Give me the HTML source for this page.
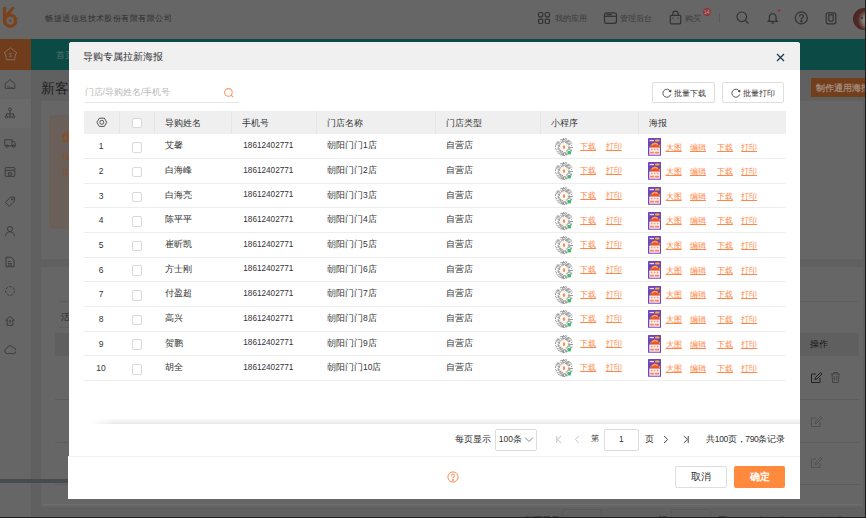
<!DOCTYPE html>
<html><head><meta charset="utf-8">
<style>
*{margin:0;padding:0;box-sizing:border-box}
html,body{width:866px;height:518px;overflow:hidden;background:#606060;font-family:"Liberation Sans",sans-serif;color:#333}
.a{position:absolute}
.nw{white-space:nowrap}
/* background page (observed dimmed colours) */
#hdr{left:0;top:0;width:866px;height:38.7px;background:#666}
#nav{left:31.3px;top:38.7px;width:835px;height:30.9px;background:#0c4a45}
#side{left:0;top:38.7px;width:32px;height:480px;background:#666;border-right:1px solid #5e5e5e}
#act{left:0;top:38.7px;width:31.3px;height:30.9px;background:#6f3c1c}
#hl{left:0;top:99px;width:31px;height:29px;background:#6a6a6a}
.card{position:absolute;background:#666}
.bgt{position:absolute;color:#2a2a2a;white-space:nowrap}
#rstrip{left:864.6px;top:0;width:1.4px;height:518px;background:#1e1e1e}
#bstrip{left:0;top:516.6px;width:866px;height:1.4px;background:#1e1e1e}
.line{position:absolute;height:1px;background:#5d5d5d}
/* modal */
#modal{left:69px;top:42px;width:731px;height:414px;background:#fff;border-radius:3px 3px 0 0;overflow:hidden}
#mfoot{left:68px;top:456px;width:732px;height:42.5px;background:#fff;border-top:1px solid #edf2f6}
#mh{left:0;top:0;width:731px;height:27.5px;background:#f0f0f0}
#mt{left:14px;top:8.5px;font-size:9.7px;color:#333;white-space:nowrap;line-height:12px}
.btn{position:absolute;border:1px solid #dedede;border-radius:2px;background:#fff;font-size:8.5px;color:#333;white-space:nowrap}
table{border-collapse:collapse;table-layout:fixed}
#tbl{position:absolute;left:14.5px;top:69px;width:702px}
#tbl th{height:23.5px;background:#efefef;font-weight:normal;text-align:left;font-size:8.5px;color:#333;padding:0;position:relative}
#tbl td{height:24.66px;font-size:8.5px;color:#333;padding:0;border-bottom:1px solid #ececec;white-space:nowrap}
#tbl th+th:before{content:"";position:absolute;left:0;top:0;width:1px;height:100%;background:#e3e3e3}
.cb{display:inline-block;width:10.5px;height:10.5px;border:1px solid #d9d9d9;border-radius:2px;background:#fff;vertical-align:middle}
.td.lk{color:#ff8646;text-decoration:underline;text-underline-offset:0.5px;text-decoration-thickness:0.7px;margin-top:1.3px;font-size:8.2px}
.th{font-size:8.5px;line-height:12px;color:#333}
.td{font-size:8.5px;line-height:12px;color:#333}
.rl{height:1px;background:#ededed}
</style></head><body>
<svg width="0" height="0" style="position:absolute">
 <defs>
  <g id="qr">
   <clipPath id="qc"><circle cx="10" cy="10" r="9"/></clipPath>
   <g clip-path="url(#qc)" fill="#4a4a4a" opacity="0.72"><rect x="1.00" y="1.00" width="0.90" height="0.90"/><rect x="1.00" y="2.80" width="0.90" height="0.90"/><rect x="1.00" y="5.50" width="0.90" height="0.90"/><rect x="1.00" y="6.40" width="0.90" height="0.90"/><rect x="1.00" y="8.20" width="0.90" height="0.90"/><rect x="1.00" y="9.10" width="0.90" height="0.90"/><rect x="1.00" y="10.90" width="0.90" height="0.90"/><rect x="1.00" y="12.70" width="0.90" height="0.90"/><rect x="1.00" y="14.50" width="0.90" height="0.90"/><rect x="1.90" y="1.90" width="0.90" height="0.90"/><rect x="1.90" y="4.60" width="0.90" height="0.90"/><rect x="1.90" y="5.50" width="0.90" height="0.90"/><rect x="1.90" y="7.30" width="0.90" height="0.90"/><rect x="1.90" y="11.80" width="0.90" height="0.90"/><rect x="1.90" y="13.60" width="0.90" height="0.90"/><rect x="1.90" y="16.30" width="0.90" height="0.90"/><rect x="1.90" y="17.20" width="0.90" height="0.90"/><rect x="1.90" y="18.10" width="0.90" height="0.90"/><rect x="2.80" y="1.90" width="0.90" height="0.90"/><rect x="2.80" y="3.70" width="0.90" height="0.90"/><rect x="2.80" y="5.50" width="0.90" height="0.90"/><rect x="2.80" y="6.40" width="0.90" height="0.90"/><rect x="2.80" y="14.50" width="0.90" height="0.90"/><rect x="3.70" y="1.90" width="0.90" height="0.90"/><rect x="3.70" y="4.60" width="0.90" height="0.90"/><rect x="3.70" y="5.50" width="0.90" height="0.90"/><rect x="3.70" y="8.20" width="0.90" height="0.90"/><rect x="3.70" y="10.00" width="0.90" height="0.90"/><rect x="3.70" y="10.90" width="0.90" height="0.90"/><rect x="3.70" y="11.80" width="0.90" height="0.90"/><rect x="3.70" y="14.50" width="0.90" height="0.90"/><rect x="3.70" y="16.30" width="0.90" height="0.90"/><rect x="3.70" y="18.10" width="0.90" height="0.90"/><rect x="4.60" y="4.60" width="0.90" height="0.90"/><rect x="4.60" y="5.50" width="0.90" height="0.90"/><rect x="4.60" y="7.30" width="0.90" height="0.90"/><rect x="4.60" y="8.20" width="0.90" height="0.90"/><rect x="4.60" y="9.10" width="0.90" height="0.90"/><rect x="4.60" y="10.90" width="0.90" height="0.90"/><rect x="4.60" y="11.80" width="0.90" height="0.90"/><rect x="4.60" y="13.60" width="0.90" height="0.90"/><rect x="4.60" y="16.30" width="0.90" height="0.90"/><rect x="4.60" y="17.20" width="0.90" height="0.90"/><rect x="5.50" y="6.40" width="0.90" height="0.90"/><rect x="5.50" y="8.20" width="0.90" height="0.90"/><rect x="5.50" y="9.10" width="0.90" height="0.90"/><rect x="5.50" y="12.70" width="0.90" height="0.90"/><rect x="5.50" y="13.60" width="0.90" height="0.90"/><rect x="5.50" y="15.40" width="0.90" height="0.90"/><rect x="5.50" y="18.10" width="0.90" height="0.90"/><rect x="6.40" y="1.90" width="0.90" height="0.90"/><rect x="6.40" y="3.70" width="0.90" height="0.90"/><rect x="6.40" y="6.40" width="0.90" height="0.90"/><rect x="6.40" y="7.30" width="0.90" height="0.90"/><rect x="6.40" y="10.00" width="0.90" height="0.90"/><rect x="6.40" y="10.90" width="0.90" height="0.90"/><rect x="6.40" y="12.70" width="0.90" height="0.90"/><rect x="6.40" y="13.60" width="0.90" height="0.90"/><rect x="6.40" y="14.50" width="0.90" height="0.90"/><rect x="6.40" y="15.40" width="0.90" height="0.90"/><rect x="6.40" y="17.20" width="0.90" height="0.90"/><rect x="6.40" y="18.10" width="0.90" height="0.90"/><rect x="7.30" y="1.90" width="0.90" height="0.90"/><rect x="7.30" y="4.60" width="0.90" height="0.90"/><rect x="7.30" y="5.50" width="0.90" height="0.90"/><rect x="7.30" y="7.30" width="0.90" height="0.90"/><rect x="7.30" y="8.20" width="0.90" height="0.90"/><rect x="7.30" y="9.10" width="0.90" height="0.90"/><rect x="7.30" y="10.90" width="0.90" height="0.90"/><rect x="7.30" y="11.80" width="0.90" height="0.90"/><rect x="7.30" y="12.70" width="0.90" height="0.90"/><rect x="7.30" y="14.50" width="0.90" height="0.90"/><rect x="7.30" y="16.30" width="0.90" height="0.90"/><rect x="7.30" y="17.20" width="0.90" height="0.90"/><rect x="8.20" y="1.90" width="0.90" height="0.90"/><rect x="8.20" y="2.80" width="0.90" height="0.90"/><rect x="8.20" y="3.70" width="0.90" height="0.90"/><rect x="8.20" y="5.50" width="0.90" height="0.90"/><rect x="8.20" y="8.20" width="0.90" height="0.90"/><rect x="8.20" y="9.10" width="0.90" height="0.90"/><rect x="8.20" y="12.70" width="0.90" height="0.90"/><rect x="8.20" y="13.60" width="0.90" height="0.90"/><rect x="8.20" y="14.50" width="0.90" height="0.90"/><rect x="8.20" y="16.30" width="0.90" height="0.90"/><rect x="8.20" y="17.20" width="0.90" height="0.90"/><rect x="8.20" y="18.10" width="0.90" height="0.90"/><rect x="9.10" y="1.00" width="0.90" height="0.90"/><rect x="9.10" y="1.90" width="0.90" height="0.90"/><rect x="9.10" y="3.70" width="0.90" height="0.90"/><rect x="9.10" y="4.60" width="0.90" height="0.90"/><rect x="9.10" y="8.20" width="0.90" height="0.90"/><rect x="9.10" y="10.90" width="0.90" height="0.90"/><rect x="9.10" y="15.40" width="0.90" height="0.90"/><rect x="9.10" y="16.30" width="0.90" height="0.90"/><rect x="9.10" y="17.20" width="0.90" height="0.90"/><rect x="9.10" y="18.10" width="0.90" height="0.90"/><rect x="10.00" y="1.90" width="0.90" height="0.90"/><rect x="10.00" y="3.70" width="0.90" height="0.90"/><rect x="10.00" y="10.00" width="0.90" height="0.90"/><rect x="10.00" y="11.80" width="0.90" height="0.90"/><rect x="10.00" y="12.70" width="0.90" height="0.90"/><rect x="10.00" y="15.40" width="0.90" height="0.90"/><rect x="10.00" y="18.10" width="0.90" height="0.90"/><rect x="10.90" y="1.00" width="0.90" height="0.90"/><rect x="10.90" y="2.80" width="0.90" height="0.90"/><rect x="10.90" y="4.60" width="0.90" height="0.90"/><rect x="10.90" y="5.50" width="0.90" height="0.90"/><rect x="10.90" y="8.20" width="0.90" height="0.90"/><rect x="10.90" y="12.70" width="0.90" height="0.90"/><rect x="10.90" y="15.40" width="0.90" height="0.90"/><rect x="10.90" y="16.30" width="0.90" height="0.90"/><rect x="10.90" y="17.20" width="0.90" height="0.90"/><rect x="11.80" y="1.00" width="0.90" height="0.90"/><rect x="11.80" y="1.90" width="0.90" height="0.90"/><rect x="11.80" y="3.70" width="0.90" height="0.90"/><rect x="11.80" y="4.60" width="0.90" height="0.90"/><rect x="11.80" y="5.50" width="0.90" height="0.90"/><rect x="11.80" y="6.40" width="0.90" height="0.90"/><rect x="11.80" y="7.30" width="0.90" height="0.90"/><rect x="11.80" y="10.00" width="0.90" height="0.90"/><rect x="11.80" y="11.80" width="0.90" height="0.90"/><rect x="11.80" y="12.70" width="0.90" height="0.90"/><rect x="11.80" y="13.60" width="0.90" height="0.90"/><rect x="11.80" y="16.30" width="0.90" height="0.90"/><rect x="11.80" y="17.20" width="0.90" height="0.90"/><rect x="11.80" y="18.10" width="0.90" height="0.90"/><rect x="12.70" y="1.00" width="0.90" height="0.90"/><rect x="12.70" y="3.70" width="0.90" height="0.90"/><rect x="12.70" y="4.60" width="0.90" height="0.90"/><rect x="12.70" y="5.50" width="0.90" height="0.90"/><rect x="12.70" y="6.40" width="0.90" height="0.90"/><rect x="12.70" y="9.10" width="0.90" height="0.90"/><rect x="12.70" y="11.80" width="0.90" height="0.90"/><rect x="12.70" y="12.70" width="0.90" height="0.90"/><rect x="12.70" y="13.60" width="0.90" height="0.90"/><rect x="12.70" y="15.40" width="0.90" height="0.90"/><rect x="12.70" y="17.20" width="0.90" height="0.90"/><rect x="12.70" y="18.10" width="0.90" height="0.90"/><rect x="13.60" y="2.80" width="0.90" height="0.90"/><rect x="13.60" y="3.70" width="0.90" height="0.90"/><rect x="13.60" y="4.60" width="0.90" height="0.90"/><rect x="13.60" y="7.30" width="0.90" height="0.90"/><rect x="13.60" y="10.00" width="0.90" height="0.90"/><rect x="13.60" y="10.90" width="0.90" height="0.90"/><rect x="13.60" y="11.80" width="0.90" height="0.90"/><rect x="14.50" y="1.00" width="0.90" height="0.90"/><rect x="14.50" y="2.80" width="0.90" height="0.90"/><rect x="14.50" y="3.70" width="0.90" height="0.90"/><rect x="14.50" y="5.50" width="0.90" height="0.90"/><rect x="14.50" y="6.40" width="0.90" height="0.90"/><rect x="14.50" y="7.30" width="0.90" height="0.90"/><rect x="14.50" y="9.10" width="0.90" height="0.90"/><rect x="14.50" y="10.00" width="0.90" height="0.90"/><rect x="14.50" y="11.80" width="0.90" height="0.90"/><rect x="14.50" y="18.10" width="0.90" height="0.90"/><rect x="15.40" y="3.70" width="0.90" height="0.90"/><rect x="15.40" y="6.40" width="0.90" height="0.90"/><rect x="15.40" y="7.30" width="0.90" height="0.90"/><rect x="15.40" y="10.00" width="0.90" height="0.90"/><rect x="15.40" y="10.90" width="0.90" height="0.90"/><rect x="15.40" y="11.80" width="0.90" height="0.90"/><rect x="15.40" y="14.50" width="0.90" height="0.90"/><rect x="15.40" y="15.40" width="0.90" height="0.90"/><rect x="15.40" y="16.30" width="0.90" height="0.90"/><rect x="15.40" y="17.20" width="0.90" height="0.90"/><rect x="15.40" y="18.10" width="0.90" height="0.90"/><rect x="16.30" y="1.00" width="0.90" height="0.90"/><rect x="16.30" y="3.70" width="0.90" height="0.90"/><rect x="16.30" y="5.50" width="0.90" height="0.90"/><rect x="16.30" y="10.00" width="0.90" height="0.90"/><rect x="16.30" y="12.70" width="0.90" height="0.90"/><rect x="16.30" y="13.60" width="0.90" height="0.90"/><rect x="16.30" y="17.20" width="0.90" height="0.90"/><rect x="17.20" y="1.00" width="0.90" height="0.90"/><rect x="17.20" y="1.90" width="0.90" height="0.90"/><rect x="17.20" y="2.80" width="0.90" height="0.90"/><rect x="17.20" y="4.60" width="0.90" height="0.90"/><rect x="17.20" y="5.50" width="0.90" height="0.90"/><rect x="17.20" y="8.20" width="0.90" height="0.90"/><rect x="17.20" y="10.00" width="0.90" height="0.90"/><rect x="17.20" y="12.70" width="0.90" height="0.90"/><rect x="17.20" y="13.60" width="0.90" height="0.90"/><rect x="17.20" y="14.50" width="0.90" height="0.90"/><rect x="17.20" y="15.40" width="0.90" height="0.90"/><rect x="17.20" y="16.30" width="0.90" height="0.90"/><rect x="17.20" y="17.20" width="0.90" height="0.90"/><rect x="17.20" y="18.10" width="0.90" height="0.90"/><rect x="18.10" y="1.00" width="0.90" height="0.90"/><rect x="18.10" y="2.80" width="0.90" height="0.90"/><rect x="18.10" y="4.60" width="0.90" height="0.90"/><rect x="18.10" y="6.40" width="0.90" height="0.90"/><rect x="18.10" y="10.00" width="0.90" height="0.90"/><rect x="18.10" y="12.70" width="0.90" height="0.90"/><rect x="18.10" y="15.40" width="0.90" height="0.90"/><rect x="18.10" y="16.30" width="0.90" height="0.90"/><rect x="18.10" y="17.20" width="0.90" height="0.90"/></g>
   <circle cx="10" cy="10" r="4.2" fill="#fff"/>
   <circle cx="10" cy="10" r="3.6" fill="none" stroke="#fbe6d8" stroke-width="0.7"/>
   <ellipse cx="10" cy="10.1" rx="1.3" ry="1.9" fill="#f59250"/>
   <circle cx="15.3" cy="15.7" r="1.9" fill="#3cbf6b"/>
  </g>
  <g id="poster">
   <rect x="0" y="0" width="13.2" height="18" rx="0.8" fill="#7044b6"/>
   <rect x="1.6" y="1.9" width="4.4" height="1.3" fill="#e6dcf5"/>
   <rect x="7" y="1.6" width="4.6" height="1.9" rx="0.9" fill="#f0b23c"/>
   <path d="M1.2 9.8 L2.4 6.4 L4.2 8.6 Z" fill="#3aa58a"/>
   <path d="M9.6 8 L12.2 6.3 L12 9.8 Z" fill="#d4a030"/>
   <path d="M2.4 10 Q2.8 5 6.9 4.6 Q11 5 11.3 10 Z" fill="#ee4f36"/>
   <path d="M3.8 7.2 Q6.5 4.2 9.8 6.6" stroke="#f8a64a" stroke-width="1.4" fill="none"/>
   <rect x="1.3" y="9.6" width="10.6" height="7.2" fill="#fdf5f8"/>
   <circle cx="3.6" cy="11.4" r="1" fill="#f39a7c"/><circle cx="6.6" cy="11.4" r="1" fill="#f5ae72"/><circle cx="9.6" cy="11.4" r="1" fill="#f39a8a"/>
   <rect x="2.1" y="13.7" width="4.1" height="1.9" fill="#f7876a"/><rect x="7" y="13.7" width="4.1" height="1.9" fill="#f7876a"/>
   <rect x="0.4" y="16.8" width="12.4" height="0.9" fill="#b58ad8"/>
  </g>
 </defs>
</svg>
<!-- ============ background ============ -->
<div id="hdr" class="a"></div>
<div id="side" class="a"></div>
<div id="act" class="a"></div>
<div id="hl" class="a"></div>
<div id="nav" class="a"></div>
<!-- logo -->
<svg class="a" style="left:0;top:3px" width="22" height="30" viewBox="0 0 22 30" fill="none" stroke="#7a411b" stroke-linecap="round">
  <circle cx="10.15" cy="17.7" r="5.6" stroke-width="3.3"/>
  <path d="M4.5 5.3 V17.7" stroke-width="3.2"/>
  <path d="M8.2 10.5 L12.7 5.3" stroke-width="3"/>
  <path d="M10.15 15.7 Q10.6 17.2 12.1 17.7 Q10.6 18.2 10.15 19.7 Q9.7 18.2 8.2 17.7 Q9.7 17.2 10.15 15.7 Z" fill="#7a411b" stroke="none"/>
  <path d="M17.8 16.8 L16 17.5 L17.8 18.4 Z" fill="#666" stroke="none"/>
</svg>
<div class="bgt" style="left:45.3px;top:11.6px;letter-spacing:0.45px;font-size:8.4px;line-height:12px;color:#2e2e2e">畅捷通信息技术股份有限有限公司</div>
<!-- header right -->
<svg class="a" style="left:537px;top:11px" width="14" height="14" viewBox="0 0 14 14" fill="none" stroke="#333" stroke-width="1.2">
  <rect x="1.5" y="1.5" width="4.3" height="4.3" rx="1.3"/><rect x="8.2" y="1.5" width="4.3" height="4.3" rx="1.3"/>
  <rect x="1.5" y="8.2" width="4.3" height="4.3" rx="1.3"/><rect x="8.2" y="8.2" width="4.3" height="4.3" rx="1.3"/>
</svg>
<div class="bgt" style="left:554.5px;top:12.5px;font-size:8.2px;color:#3a3a3a">我的应用</div>
<svg class="a" style="left:603px;top:11px" width="15" height="14" viewBox="0 0 15 14" fill="none" stroke="#333" stroke-width="1.2">
  <rect x="1.5" y="1.8" width="12" height="10.5" rx="2"/><path d="M1.5 5.3 H13.5"/><path d="M3.5 3.6 H9"/>
</svg>
<div class="bgt" style="left:619.7px;top:12.5px;font-size:8.2px;color:#3a3a3a">管理后台</div>
<svg class="a" style="left:669px;top:10px" width="13" height="15" viewBox="0 0 13 15" fill="none" stroke="#333" stroke-width="1.2">
  <rect x="1.3" y="5.3" width="10.4" height="8.5" rx="1"/><path d="M3.8 5.3 V3.8 A2.7 2.7 0 0 1 9.2 3.8 V5.3"/><path d="M3.8 7.5 v1 M9.2 7.5 v1"/>
</svg>
<div class="bgt" style="left:685.4px;top:12.5px;font-size:8.2px;color:#3a3a3a">购买</div>
<div class="a" style="left:702.5px;top:7.5px;width:8.6px;height:8.6px;border-radius:50%;background:#8a3a3a;color:#c9a0a0;font-size:5px;line-height:8.6px;text-align:center">14</div>
<div class="a" style="left:718.5px;top:13px;width:1px;height:10px;background:#5a5a5a"></div>
<svg class="a" style="left:735px;top:10px" width="15" height="15" viewBox="0 0 15 15" fill="none" stroke="#333" stroke-width="1.2">
  <circle cx="6.8" cy="6.8" r="4.8"/><path d="M10.3 10.3 L13.5 13.5"/>
</svg>
<svg class="a" style="left:765px;top:9px" width="16" height="16" viewBox="0 0 16 16" fill="none" stroke="#333" stroke-width="1.2">
  <path d="M3.2 12.3 H12.2 L11 10.5 V7 A3.5 3.5 0 0 0 4.4 7 V10.5 Z"/><path d="M6.3 14 H9.1"/><circle cx="14" cy="1.5" r="1.3" fill="#8a3434" stroke="none"/>
</svg>
<svg class="a" style="left:794px;top:10.5px" width="15" height="15" viewBox="0 0 15 15" fill="none" stroke="#333" stroke-width="1.2">
  <circle cx="7.3" cy="6.9" r="6"/><path d="M5.5 5.5 A1.9 1.9 0 1 1 7.4 7.3 V8.6"/><circle cx="7.4" cy="10.3" r="0.6" fill="#333"/>
</svg>
<svg class="a" style="left:825px;top:12px" width="12" height="13" viewBox="0 0 12 13" fill="none" stroke="#333" stroke-width="1.2">
  <rect x="1.2" y="0.8" width="9.6" height="11" rx="2"/><path d="M3.8 2.8 H8.2 V8.5 Q6 10 3.8 8.5 Z"/>
</svg>
<div class="a" style="left:852.7px;top:7.7px;width:22.4px;height:22.4px;border-radius:50%;background:radial-gradient(circle at 70% 55%,#9a9290 0,#857a76 28%,#4e2a26 55%,#45201c 100%);overflow:hidden">
  <div class="a" style="left:8px;top:9px;width:2px;height:2px;border-radius:50%;background:#333"></div>
</div>
<!-- nav text -->
<div class="bgt" style="left:56px;top:48.5px;font-size:9px;line-height:12px;color:#557470">首页</div>
<!-- sidebar icons -->
<svg class="a" style="left:0;top:38px" width="22" height="26" viewBox="0 0 22 26" fill="none" stroke="#8a6a58" stroke-width="1" stroke-linejoin="round">
  <path d="M10.5 9.8 L17 15 L15.5 16 L14.5 21.8 H6.5 L5.5 16 L4 15 Z"/><text x="10.5" y="18.6" font-size="6" text-anchor="middle" fill="#8a6a58" stroke="none" font-family="Liberation Sans">$</text>
</svg>
<svg class="a" style="left:4.3px;top:78px" width="12" height="12" viewBox="0 0 15 15" fill="none" stroke="#383838" stroke-width="1.1"><path d="M1.5 7 L7.5 2 L13.5 7 V13 H1.5 Z"/><path d="M5 10 v2 M7 11 v1 M9 12 h2"/></svg>
<svg class="a" style="left:4.3px;top:107px" width="12" height="12" viewBox="0 0 15 15" fill="none" stroke="#383838" stroke-width="1.1"><circle cx="7.5" cy="3" r="1.8"/><path d="M7.5 4.8 V8 M3 11 V8.5 H12 V11 M7.5 8 V11"/><circle cx="3" cy="12.3" r="1.5"/><circle cx="7.5" cy="12.3" r="1.5"/><circle cx="12" cy="12.3" r="1.5"/></svg>
<svg class="a" style="left:4.3px;top:137px" width="12" height="12" viewBox="0 0 15 15" fill="none" stroke="#383838" stroke-width="1.1"><path d="M1 3.5 H10 V11 H1 Z M10 5.5 H12.5 L14.5 8.5 V11 H10"/><circle cx="4" cy="11.5" r="1.5"/><circle cx="12" cy="11.5" r="1.5"/></svg>
<svg class="a" style="left:4.3px;top:166px" width="12" height="12" viewBox="0 0 15 15" fill="none" stroke="#383838" stroke-width="1.1"><rect x="1.5" y="2" width="12" height="11" rx="1"/><path d="M1.5 5.5 H13.5 M5.5 8.5 H9.5 V11.5 H5.5 Z"/></svg>
<svg class="a" style="left:4.3px;top:196px" width="12" height="12" viewBox="0 0 15 15" fill="none" stroke="#383838" stroke-width="1.1"><path d="M8 1.5 H13 V6.5 L6.5 13 L1.8 8.3 Z"/><circle cx="10.3" cy="4.2" r="0.9"/></svg>
<svg class="a" style="left:4.3px;top:225px" width="12" height="12" viewBox="0 0 15 15" fill="none" stroke="#383838" stroke-width="1.1"><circle cx="7.5" cy="5" r="3.2"/><path d="M1.8 14 A5.7 5.5 0 0 1 13.2 14"/></svg>
<svg class="a" style="left:4.3px;top:256px" width="12" height="12" viewBox="0 0 15 15" fill="none" stroke="#383838" stroke-width="1.1"><path d="M2.5 1.5 H9 L12.5 5 V13.5 H2.5 Z M5 7 H8 M5 9.5 H10 M5 11.5 H10"/></svg>
<svg class="a" style="left:4.3px;top:285px" width="12" height="12" viewBox="0 0 15 15" fill="none" stroke="#383838" stroke-width="1.1"><circle cx="7.5" cy="7.5" r="5.5" stroke-dasharray="3.2 1.6"/></svg>
<svg class="a" style="left:4.3px;top:315px" width="12" height="12" viewBox="0 0 15 15" fill="none" stroke="#383838" stroke-width="1.1"><path d="M7.5 1.8 L13 6.5 H11 V13 H4 V6.5 H2 Z M7.5 6.5 V10.5 M6 8 L7.5 6.5 L9 8"/></svg>
<svg class="a" style="left:4.3px;top:344px" width="12" height="12" viewBox="0 0 15 15" fill="none" stroke="#383838" stroke-width="1.1"><path d="M4 12 A3.3 3.3 0 0 1 3.6 5.5 A4.3 4.3 0 0 1 11.8 5 A3.5 3.5 0 0 1 12 12 Z"/></svg>
<!-- main content -->
<div class="bgt" style="left:41.3px;top:80.5px;font-size:14px;line-height:14px;color:#222">新客户运营</div>
<div class="a" style="left:811px;top:78px;width:60px;height:19.3px;background:#733e1c;color:#a08878;font-size:9px;line-height:21px;padding-left:5px;font-weight:bold;white-space:nowrap">制作通用海报</div>
<div class="card" style="left:41px;top:101px;width:821.5px;height:158px"></div>
<div class="a" style="left:49px;top:114.6px;width:740px;height:114px;border-radius:3px;background:linear-gradient(90deg,#6b5f59,#68625f)"></div>
<div class="bgt" style="left:61.5px;top:131px;font-size:10.5px;font-weight:bold;color:#8e4d1f">优惠券</div>
<div class="bgt" style="left:61.5px;top:151px;font-size:8px;color:#85502c">领券</div>
<div class="bgt" style="left:61.5px;top:166px;font-size:8px;color:#85502c">送券</div>
<div class="card" style="left:41px;top:266.6px;width:821.5px;height:240px"></div>
<div class="line" style="left:59px;top:301px;width:799px"></div>
<div class="bgt" style="left:60.5px;top:312px;font-size:8.5px">活动</div>
<div class="line" style="left:59px;top:326.6px;width:70px"></div>
<div class="a" style="left:55.3px;top:332.6px;width:804px;height:23.5px;background:#5f5f5f"></div>
<div class="bgt" style="left:810.2px;top:337.5px;font-size:8.8px;line-height:12px;color:#181818">操作</div>
<div class="line" style="left:55px;top:398.5px;width:804px"></div>
<div class="line" style="left:55px;top:441.5px;width:804px"></div>
<div class="line" style="left:55px;top:484px;width:804px"></div>
<div class="line" style="left:43.5px;top:504.2px;width:818px;background:#6e6e6e"></div>
<svg class="a" style="left:810px;top:371px" width="13" height="13" viewBox="0 0 13 13" fill="none" stroke="#222" stroke-width="1">
  <path d="M10 7 V11.5 H1.5 V3 H6 M5 8.5 L5.5 6.5 L10.5 1.5 L12 3 L7 8 Z"/>
</svg>
<svg class="a" style="left:829px;top:371px" width="13" height="13" viewBox="0 0 13 13" fill="none" stroke="#454545" stroke-width="1">
  <path d="M2 3 H11 M4.5 3 V1.5 H8.5 V3 M3 3 L3.7 11.5 H9.3 L10 3 M5.3 5 V9.5 M7.7 5 V9.5"/>
</svg>
<svg class="a" style="left:810px;top:415px" width="13" height="13" viewBox="0 0 13 13" fill="none" stroke="#505050" stroke-width="1">
  <path d="M10 7 V11.5 H1.5 V3 H6 M5 8.5 L5.5 6.5 L10.5 1.5 L12 3 L7 8 Z"/>
</svg>
<svg class="a" style="left:810px;top:456px" width="13" height="13" viewBox="0 0 13 13" fill="none" stroke="#505050" stroke-width="1">
  <path d="M10 7 V11.5 H1.5 V3 H6 M5 8.5 L5.5 6.5 L10.5 1.5 L12 3 L7 8 Z"/>
</svg>
<div class="a" style="left:0;top:478.5px;width:70px;height:4px;background:#464b4d"></div>
<div class="bgt" style="left:524px;top:513.5px;font-size:8.5px;line-height:12px;color:#2c2c2c">每页显示</div>
<div class="bgt" style="left:623px;top:513.5px;font-size:8.5px;line-height:12px;color:#4a4a4a">&lt;</div>
<div class="bgt" style="left:643px;top:513.5px;font-size:8.5px;line-height:12px;color:#4a4a4a">&lt;</div>
<div class="bgt" style="left:658px;top:513.5px;font-size:8.5px;line-height:12px;color:#2c2c2c">第</div>
<div class="bgt" style="left:718px;top:513.5px;font-size:8.5px;line-height:12px;color:#2c2c2c">页</div>
<div class="bgt" style="left:737px;top:513.5px;font-size:8.5px;line-height:12px;color:#2c2c2c">&gt;</div>
<div class="bgt" style="left:755px;top:513.5px;font-size:8.5px;line-height:12px;color:#2c2c2c">&gt;|</div>
<div class="bgt" style="left:778px;top:513.5px;font-size:8.3px;line-height:12px;color:#2c2c2c">共1页，400条记录</div>
<div class="a" style="left:562.4px;top:508.9px;width:40px;height:20px;border:1px solid #5a5a5a;border-radius:2px"></div>
<div class="a" style="left:671.3px;top:508.9px;width:40px;height:20px;border:1px solid #5a5a5a;border-radius:2px"></div>
<div id="rstrip" class="a"></div>
<div id="bstrip" class="a"></div>

<!-- ============ modal ============ -->
<div id="modal" class="a">
  <div id="mh" class="a"><div id="mt" class="a">导购专属拉新海报</div>
<svg class="a" style="left:706.6px;top:10.5px" width="9" height="9" viewBox="0 0 9 9" stroke="#1b3a4e" stroke-width="1.25"><path d="M1 1 L8 8 M8 1 L1 8"/></svg></div>
<!--MB-->
<div class="nw a" style="left:15.5px;top:44px;font-size:8.8px;line-height:12px;color:#b8b8b8">门店/导购姓名/手机号</div>
<div class="a" style="left:15.5px;top:59.6px;width:154.5px;height:1px;background:#e6e6e6"></div>
<svg class="a" style="left:154px;top:45px" width="12" height="12" viewBox="0 0 12 12" fill="none" stroke="#f59a63" stroke-width="1.1"><circle cx="5.4" cy="5.4" r="3.8"/><path d="M8.2 8.2 L10.2 10.2"/></svg>
<div class="btn" style="left:583px;top:40.2px;width:62.7px;height:20.4px"><svg width="10" height="10" viewBox="0 0 10 10" style="position:absolute;left:8.5px;top:4.6px" fill="none" stroke="#444" stroke-width="0.9"><path d="M8.4 3.3 A4 4 0 1 0 8.7 6.4"/><path d="M9.3 1.4 L9.2 4.4 L6.6 3.6 Z" fill="#444" stroke="none"/></svg><span class="a" style="left:20.5px;top:3.5px;line-height:12px;font-size:8.3px">批量下载</span></div>
<div class="btn" style="left:652.8px;top:40.2px;width:62.7px;height:20.4px"><svg width="10" height="10" viewBox="0 0 10 10" style="position:absolute;left:8.5px;top:4.6px" fill="none" stroke="#444" stroke-width="0.9"><path d="M8.4 3.3 A4 4 0 1 0 8.7 6.4"/><path d="M9.3 1.4 L9.2 4.4 L6.6 3.6 Z" fill="#444" stroke="none"/></svg><span class="a" style="left:20.5px;top:3.5px;line-height:12px;font-size:8.3px">批量打印</span></div>
<div class="a" style="left:14.5px;top:69px;width:702.0px;height:23.3px;background:#efefef"></div>
<div class="a" style="left:49.5px;top:69px;width:1px;height:23.3px;background:#e6e6e6"></div>
<div class="a" style="left:84.5px;top:69px;width:1px;height:23.3px;background:#e6e6e6"></div>
<div class="a" style="left:161.5px;top:69px;width:1px;height:23.3px;background:#e6e6e6"></div>
<div class="a" style="left:246.5px;top:69px;width:1px;height:23.3px;background:#e6e6e6"></div>
<div class="a" style="left:365.5px;top:69px;width:1px;height:23.3px;background:#e6e6e6"></div>
<div class="a" style="left:470.5px;top:69px;width:1px;height:23.3px;background:#e6e6e6"></div>
<div class="a" style="left:568.5px;top:69px;width:1px;height:23.3px;background:#e6e6e6"></div>
<div class="nw a th" style="left:96.3px;top:74.5px">导购姓名</div>
<div class="nw a th" style="left:173.3px;top:74.5px">手机号</div>
<div class="nw a th" style="left:258.3px;top:74.5px">门店名称</div>
<div class="nw a th" style="left:377.3px;top:74.5px">门店类型</div>
<div class="nw a th" style="left:482.3px;top:74.5px">小程序</div>
<div class="nw a th" style="left:580.3px;top:74.5px">海报</div>
<svg class="a" style="left:27px;top:75px" width="12" height="11" viewBox="0 0 12 11" fill="none" stroke="#555" stroke-width="1" stroke-linejoin="round"><path d="M0.9 5.3 L3.3 1.2 H8.3 L10.7 5.3 L8.3 9.4 H3.3 Z"/><circle cx="5.8" cy="5.3" r="2"/></svg>
<div class="cb a" style="left:62.5px;top:75.7px"></div>
<div class="a rl" style="left:14.5px;top:115.95px;width:702.0px"></div>
<div class="nw a td" style="left:14.5px;top:97.32px;width:35px;text-align:center;margin-top:1px">1</div>
<div class="cb a" style="left:62.5px;top:100.22px"></div>
<div class="nw a td" style="left:96.2px;top:97.32px">艾馨</div>
<div class="nw a td" style="left:174.3px;top:97.32px;margin-top:0.8px;font-size:8.2px">18612402771</div>
<div class="nw a td" style="left:258px;top:97.32px">朝阳门门1店</div>
<div class="nw a td" style="left:377.3px;top:97.32px">自营店</div>
<svg class="a" style="left:484.8px;top:94.62px" width="20" height="20"><use href="#qr"/></svg>
<div class="nw a td lk" style="left:511.2px;top:97.32px">下载</div>
<div class="nw a td lk" style="left:536.7px;top:97.32px">打印</div>
<svg class="a" style="left:578.9px;top:95.62px" width="13.2" height="18"><use href="#poster"/></svg>
<div class="nw a td lk" style="left:596.7px;top:98.22px">大图</div>
<div class="nw a td lk" style="left:621px;top:98.22px">编辑</div>
<div class="nw a td lk" style="left:647.9px;top:98.22px">下载</div>
<div class="nw a td lk" style="left:672.2px;top:98.22px">打印</div>
<div class="a rl" style="left:14.5px;top:140.6px;width:702.0px"></div>
<div class="nw a td" style="left:14.5px;top:121.97px;width:35px;text-align:center;margin-top:1px">2</div>
<div class="cb a" style="left:62.5px;top:124.88px"></div>
<div class="nw a td" style="left:96.2px;top:121.97px">白海峰</div>
<div class="nw a td" style="left:174.3px;top:121.97px;margin-top:0.8px;font-size:8.2px">18612402771</div>
<div class="nw a td" style="left:258px;top:121.97px">朝阳门门2店</div>
<div class="nw a td" style="left:377.3px;top:121.97px">自营店</div>
<svg class="a" style="left:484.8px;top:119.28px" width="20" height="20"><use href="#qr"/></svg>
<div class="nw a td lk" style="left:511.2px;top:121.97px">下载</div>
<div class="nw a td lk" style="left:536.7px;top:121.97px">打印</div>
<svg class="a" style="left:578.9px;top:120.28px" width="13.2" height="18"><use href="#poster"/></svg>
<div class="nw a td lk" style="left:596.7px;top:122.87px">大图</div>
<div class="nw a td lk" style="left:621px;top:122.87px">编辑</div>
<div class="nw a td lk" style="left:647.9px;top:122.87px">下载</div>
<div class="nw a td lk" style="left:672.2px;top:122.87px">打印</div>
<div class="a rl" style="left:14.5px;top:165.25px;width:702.0px"></div>
<div class="nw a td" style="left:14.5px;top:146.62px;width:35px;text-align:center;margin-top:1px">3</div>
<div class="cb a" style="left:62.5px;top:149.53px"></div>
<div class="nw a td" style="left:96.2px;top:146.62px">白海亮</div>
<div class="nw a td" style="left:174.3px;top:146.62px;margin-top:0.8px;font-size:8.2px">18612402771</div>
<div class="nw a td" style="left:258px;top:146.62px">朝阳门门3店</div>
<div class="nw a td" style="left:377.3px;top:146.62px">自营店</div>
<svg class="a" style="left:484.8px;top:143.93px" width="20" height="20"><use href="#qr"/></svg>
<div class="nw a td lk" style="left:511.2px;top:146.62px">下载</div>
<div class="nw a td lk" style="left:536.7px;top:146.62px">打印</div>
<svg class="a" style="left:578.9px;top:144.93px" width="13.2" height="18"><use href="#poster"/></svg>
<div class="nw a td lk" style="left:596.7px;top:147.52px">大图</div>
<div class="nw a td lk" style="left:621px;top:147.52px">编辑</div>
<div class="nw a td lk" style="left:647.9px;top:147.52px">下载</div>
<div class="nw a td lk" style="left:672.2px;top:147.52px">打印</div>
<div class="a rl" style="left:14.5px;top:189.9px;width:702.0px"></div>
<div class="nw a td" style="left:14.5px;top:171.27px;width:35px;text-align:center;margin-top:1px">4</div>
<div class="cb a" style="left:62.5px;top:174.17px"></div>
<div class="nw a td" style="left:96.2px;top:171.27px">陈平平</div>
<div class="nw a td" style="left:174.3px;top:171.27px;margin-top:0.8px;font-size:8.2px">18612402771</div>
<div class="nw a td" style="left:258px;top:171.27px">朝阳门门4店</div>
<div class="nw a td" style="left:377.3px;top:171.27px">自营店</div>
<svg class="a" style="left:484.8px;top:168.57px" width="20" height="20"><use href="#qr"/></svg>
<div class="nw a td lk" style="left:511.2px;top:171.27px">下载</div>
<div class="nw a td lk" style="left:536.7px;top:171.27px">打印</div>
<svg class="a" style="left:578.9px;top:169.57px" width="13.2" height="18"><use href="#poster"/></svg>
<div class="nw a td lk" style="left:596.7px;top:172.17px">大图</div>
<div class="nw a td lk" style="left:621px;top:172.17px">编辑</div>
<div class="nw a td lk" style="left:647.9px;top:172.17px">下载</div>
<div class="nw a td lk" style="left:672.2px;top:172.17px">打印</div>
<div class="a rl" style="left:14.5px;top:214.55px;width:702.0px"></div>
<div class="nw a td" style="left:14.5px;top:195.92px;width:35px;text-align:center;margin-top:1px">5</div>
<div class="cb a" style="left:62.5px;top:198.82px"></div>
<div class="nw a td" style="left:96.2px;top:195.92px">崔昕凯</div>
<div class="nw a td" style="left:174.3px;top:195.92px;margin-top:0.8px;font-size:8.2px">18612402771</div>
<div class="nw a td" style="left:258px;top:195.92px">朝阳门门5店</div>
<div class="nw a td" style="left:377.3px;top:195.92px">自营店</div>
<svg class="a" style="left:484.8px;top:193.22px" width="20" height="20"><use href="#qr"/></svg>
<div class="nw a td lk" style="left:511.2px;top:195.92px">下载</div>
<div class="nw a td lk" style="left:536.7px;top:195.92px">打印</div>
<svg class="a" style="left:578.9px;top:194.22px" width="13.2" height="18"><use href="#poster"/></svg>
<div class="nw a td lk" style="left:596.7px;top:196.82px">大图</div>
<div class="nw a td lk" style="left:621px;top:196.82px">编辑</div>
<div class="nw a td lk" style="left:647.9px;top:196.82px">下载</div>
<div class="nw a td lk" style="left:672.2px;top:196.82px">打印</div>
<div class="a rl" style="left:14.5px;top:239.2px;width:702.0px"></div>
<div class="nw a td" style="left:14.5px;top:220.57px;width:35px;text-align:center;margin-top:1px">6</div>
<div class="cb a" style="left:62.5px;top:223.48px"></div>
<div class="nw a td" style="left:96.2px;top:220.57px">方士刚</div>
<div class="nw a td" style="left:174.3px;top:220.57px;margin-top:0.8px;font-size:8.2px">18612402771</div>
<div class="nw a td" style="left:258px;top:220.57px">朝阳门门6店</div>
<div class="nw a td" style="left:377.3px;top:220.57px">自营店</div>
<svg class="a" style="left:484.8px;top:217.88px" width="20" height="20"><use href="#qr"/></svg>
<div class="nw a td lk" style="left:511.2px;top:220.57px">下载</div>
<div class="nw a td lk" style="left:536.7px;top:220.57px">打印</div>
<svg class="a" style="left:578.9px;top:218.88px" width="13.2" height="18"><use href="#poster"/></svg>
<div class="nw a td lk" style="left:596.7px;top:221.47px">大图</div>
<div class="nw a td lk" style="left:621px;top:221.47px">编辑</div>
<div class="nw a td lk" style="left:647.9px;top:221.47px">下载</div>
<div class="nw a td lk" style="left:672.2px;top:221.47px">打印</div>
<div class="a rl" style="left:14.5px;top:263.85px;width:702.0px"></div>
<div class="nw a td" style="left:14.5px;top:245.22px;width:35px;text-align:center;margin-top:1px">7</div>
<div class="cb a" style="left:62.5px;top:248.12px"></div>
<div class="nw a td" style="left:96.2px;top:245.22px">付盈超</div>
<div class="nw a td" style="left:174.3px;top:245.22px;margin-top:0.8px;font-size:8.2px">18612402771</div>
<div class="nw a td" style="left:258px;top:245.22px">朝阳门门7店</div>
<div class="nw a td" style="left:377.3px;top:245.22px">自营店</div>
<svg class="a" style="left:484.8px;top:242.52px" width="20" height="20"><use href="#qr"/></svg>
<div class="nw a td lk" style="left:511.2px;top:245.22px">下载</div>
<div class="nw a td lk" style="left:536.7px;top:245.22px">打印</div>
<svg class="a" style="left:578.9px;top:243.52px" width="13.2" height="18"><use href="#poster"/></svg>
<div class="nw a td lk" style="left:596.7px;top:246.12px">大图</div>
<div class="nw a td lk" style="left:621px;top:246.12px">编辑</div>
<div class="nw a td lk" style="left:647.9px;top:246.12px">下载</div>
<div class="nw a td lk" style="left:672.2px;top:246.12px">打印</div>
<div class="a rl" style="left:14.5px;top:288.5px;width:702.0px"></div>
<div class="nw a td" style="left:14.5px;top:269.88px;width:35px;text-align:center;margin-top:1px">8</div>
<div class="cb a" style="left:62.5px;top:272.78px"></div>
<div class="nw a td" style="left:96.2px;top:269.88px">高兴</div>
<div class="nw a td" style="left:174.3px;top:269.88px;margin-top:0.8px;font-size:8.2px">18612402771</div>
<div class="nw a td" style="left:258px;top:269.88px">朝阳门门8店</div>
<div class="nw a td" style="left:377.3px;top:269.88px">自营店</div>
<svg class="a" style="left:484.8px;top:267.18px" width="20" height="20"><use href="#qr"/></svg>
<div class="nw a td lk" style="left:511.2px;top:269.88px">下载</div>
<div class="nw a td lk" style="left:536.7px;top:269.88px">打印</div>
<svg class="a" style="left:578.9px;top:268.18px" width="13.2" height="18"><use href="#poster"/></svg>
<div class="nw a td lk" style="left:596.7px;top:270.78px">大图</div>
<div class="nw a td lk" style="left:621px;top:270.78px">编辑</div>
<div class="nw a td lk" style="left:647.9px;top:270.78px">下载</div>
<div class="nw a td lk" style="left:672.2px;top:270.78px">打印</div>
<div class="a rl" style="left:14.5px;top:313.15px;width:702.0px"></div>
<div class="nw a td" style="left:14.5px;top:294.52px;width:35px;text-align:center;margin-top:1px">9</div>
<div class="cb a" style="left:62.5px;top:297.43px"></div>
<div class="nw a td" style="left:96.2px;top:294.52px">贺鹏</div>
<div class="nw a td" style="left:174.3px;top:294.52px;margin-top:0.8px;font-size:8.2px">18612402771</div>
<div class="nw a td" style="left:258px;top:294.52px">朝阳门门9店</div>
<div class="nw a td" style="left:377.3px;top:294.52px">自营店</div>
<svg class="a" style="left:484.8px;top:291.82px" width="20" height="20"><use href="#qr"/></svg>
<div class="nw a td lk" style="left:511.2px;top:294.52px">下载</div>
<div class="nw a td lk" style="left:536.7px;top:294.52px">打印</div>
<svg class="a" style="left:578.9px;top:292.82px" width="13.2" height="18"><use href="#poster"/></svg>
<div class="nw a td lk" style="left:596.7px;top:295.42px">大图</div>
<div class="nw a td lk" style="left:621px;top:295.42px">编辑</div>
<div class="nw a td lk" style="left:647.9px;top:295.42px">下载</div>
<div class="nw a td lk" style="left:672.2px;top:295.42px">打印</div>
<div class="a rl" style="left:14.5px;top:337.8px;width:702.0px"></div>
<div class="nw a td" style="left:14.5px;top:319.17px;width:35px;text-align:center;margin-top:1px">10</div>
<div class="cb a" style="left:62.5px;top:322.07px"></div>
<div class="nw a td" style="left:96.2px;top:319.17px">胡全</div>
<div class="nw a td" style="left:174.3px;top:319.17px;margin-top:0.8px;font-size:8.2px">18612402771</div>
<div class="nw a td" style="left:258px;top:319.17px">朝阳门门10店</div>
<div class="nw a td" style="left:377.3px;top:319.17px">自营店</div>
<svg class="a" style="left:484.8px;top:316.47px" width="20" height="20"><use href="#qr"/></svg>
<div class="nw a td lk" style="left:511.2px;top:319.17px">下载</div>
<div class="nw a td lk" style="left:536.7px;top:319.17px">打印</div>
<svg class="a" style="left:578.9px;top:317.47px" width="13.2" height="18"><use href="#poster"/></svg>
<div class="nw a td lk" style="left:596.7px;top:320.07px">大图</div>
<div class="nw a td lk" style="left:621px;top:320.07px">编辑</div>
<div class="nw a td lk" style="left:647.9px;top:320.07px">下载</div>
<div class="nw a td lk" style="left:672.2px;top:320.07px">打印</div>
<div class="a" style="left:21px;top:375.5px;width:710px;height:6.5px;background:linear-gradient(to bottom,rgba(0,0,0,0),rgba(0,0,0,0.09));-webkit-mask-image:linear-gradient(to right,transparent 0,#000 24px)"></div>
<div class="nw a td" style="left:385.6px;top:391.3px">每页显示</div>
<div class="a" style="left:426.3px;top:387.1px;width:42px;height:21.7px;border:1px solid #dcdcdc;border-radius:2px"></div>
<div class="nw a td" style="left:429.8px;top:391.3px">100条</div>
<svg class="a" style="left:455px;top:394px" width="10" height="7" viewBox="0 0 10 7" fill="none" stroke="#777" stroke-width="0.9"><path d="M1 1.5 L5 5.5 L9 1.5"/></svg>
<svg class="a" style="left:486px;top:392px" width="8" height="11" viewBox="0 0 8 11" fill="none" stroke="#bbb" stroke-width="0.9"><path d="M1.8 2 V9 M6.2 2 L2.6 5.5 L6.2 9"/></svg>
<svg class="a" style="left:503.5px;top:392px" width="8" height="11" viewBox="0 0 8 11" fill="none" stroke="#bbb" stroke-width="0.9"><path d="M5.8 2 L2.4 5.5 L5.8 9"/></svg>
<div class="nw a td" style="left:521.5px;top:391.3px;font-size:8px">第</div>
<div class="a" style="left:535.2px;top:386.9px;width:34.6px;height:22.4px;border:1px solid #dcdcdc;border-radius:2px"></div>
<div class="nw a td" style="left:535.2px;top:391.3px;width:34.6px;text-align:center">1</div>
<div class="nw a td" style="left:575.6px;top:391.3px">页</div>
<svg class="a" style="left:593px;top:392px" width="8" height="11" viewBox="0 0 8 11" fill="none" stroke="#333" stroke-width="0.9"><path d="M2.2 2 L5.6 5.5 L2.2 9"/></svg>
<svg class="a" style="left:612.5px;top:392px" width="8" height="11" viewBox="0 0 8 11" fill="none" stroke="#333" stroke-width="0.9"><path d="M6.2 2 V9 M1.8 2 L5.4 5.5 L1.8 9"/></svg>
<div class="nw a td" style="left:637.2px;top:391.3px;letter-spacing:-0.35px">共100页，790条记录</div>
<!--/MB-->
</div>
<div id="mfoot" class="a"><!--MF-->
<svg class="a" style="left:379.4px;top:14.3px" width="12" height="12" viewBox="0 0 12 12" fill="none" stroke="#fa8c52" stroke-width="1"><circle cx="6" cy="6" r="5.1"/><path d="M4.4 4.7 A1.6 1.6 0 1 1 6 6.2 V7.3"/><circle cx="6" cy="8.9" r="0.55" fill="#fa8c52"/></svg>
<div class="a nw" style="left:607px;top:9.3px;width:51.6px;height:22px;border:1px solid #dedede;border-radius:2px;font-size:9.5px;line-height:20px;text-align:center;color:#333">取消</div>
<div class="a nw" style="left:665.8px;top:9.3px;width:51.5px;height:22px;background:#ff8a3d;border-radius:2px;font-size:9.5px;line-height:22px;text-align:center;color:#fff;font-weight:bold">确定</div>
<!--/MF--></div>
</body></html>
